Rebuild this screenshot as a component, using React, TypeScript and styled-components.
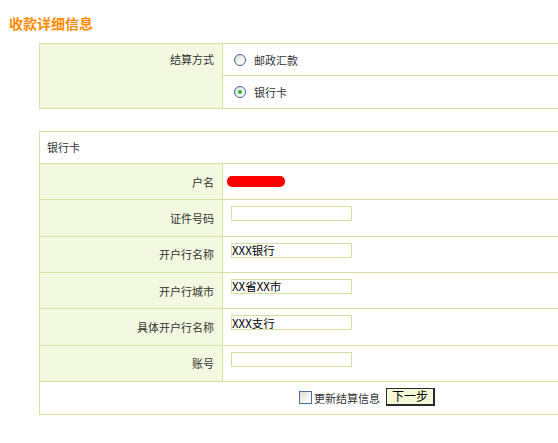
import React from 'react'
import styled, { createGlobalStyle } from 'styled-components'

const GlobalStyle = createGlobalStyle`
  html, body {
    margin: 0;
    padding: 0;
    overflow: hidden;
    background: #ffffff;
  }
  body {
    font-family: 'Noto Sans CJK SC', 'Liberation Sans', sans-serif;
    font-size: 11px;
    color: #333333;
  }
`

const BORDER = '#d3e1a2'
const LABEL_BG = '#f3f8e0'

const Page = styled.div`
  padding: 13px 0 0 9px;
`

const Title = styled.h2`
  margin: 0 0 9px 0;
  font-size: 14px;
  line-height: 21px;
  font-weight: 700;
  color: #ff8a00;
`

// the tables run on past the right edge of the window, so no right border
const Table = styled.div<{ $gap?: number }>`
  margin-left: 30px;
  margin-bottom: ${(p) => p.$gap || 0}px;
  border: 1px solid ${BORDER};
  border-right: none;
`

const PayGrid = styled.div`
  display: grid;
  grid-template-columns: 183px 1fr;
  grid-template-rows: 32px 32px;
`

const PayLabel = styled.div`
  grid-row: 1 / span 2;
  background: ${LABEL_BG};
  border-right: 1px solid ${BORDER};
  text-align: right;
  padding-right: 8px;
  line-height: 31px;
`

const PayOption = styled.label<{ $first?: boolean }>`
  display: flex;
  align-items: center;
  gap: 8px;
  padding-left: 11px;
  border-bottom: ${(p) => (p.$first ? `1px solid ${BORDER}` : 'none')};
`

const Radio = styled.span<{ $checked?: boolean }>`
  position: relative;
  width: 10px;
  height: 10px;
  border: 1px solid #38659a;
  border-radius: 50%;
  background: linear-gradient(135deg, #dcdcd4 0%, #ffffff 80%);
  &::after {
    content: '';
    display: ${(p) => (p.$checked ? 'block' : 'none')};
    position: absolute;
    left: 3px;
    top: 3px;
    width: 4px;
    height: 4px;
    border-radius: 50%;
    background: #2fb42f;
  }
`

const SectionHead = styled.div`
  height: 31px;
  line-height: 31px;
  padding-left: 7px;
  border-bottom: 1px solid ${BORDER};
`

const FieldRow = styled.div`
  display: grid;
  grid-template-columns: 183px 1fr;
  height: 35.33px;
  border-bottom: 1px solid ${BORDER};
`

const FieldLabel = styled.div`
  background: ${LABEL_BG};
  border-right: 1px solid ${BORDER};
  display: flex;
  align-items: center;
  justify-content: flex-end;
  padding-right: 8px;
`

const FieldValue = styled.div<{ $center?: boolean }>`
  display: flex;
  align-items: ${(p) => (p.$center ? 'center' : 'flex-start')};
  padding: ${(p) => (p.$center ? '0 0 0 4px' : '6px 0 0 8px')};
`

const TextBox = styled.input`
  box-sizing: border-box;
  width: 121px;
  height: 15px;
  margin: 0;
  padding: 0;
  border: 1px solid #d2dfa5;
  font-family: 'Noto Sans CJK SC', 'Liberation Sans', sans-serif;
  font-size: 11.5px;
  line-height: 13px;
  color: #000000;
  background: #ffffff;
  outline: none;
`

const Redacted = styled.span`
  display: block;
  width: 58px;
  height: 11px;
  margin-top: -1px;
  background: #ff0000;
  border-radius: 5px;
`

const Footer = styled.div`
  height: 32px;
  display: flex;
  align-items: center;
  gap: 6px;
  padding-left: 259px;
`

const CheckLabel = styled.label`
  display: flex;
  align-items: center;
  gap: 2px;
  color: #333333;
`

const CheckBox = styled.span`
  width: 11px;
  height: 11px;
  border: 1px solid #4a6e9c;
  background: linear-gradient(135deg, #dcdcd4 0%, #ffffff 85%);
`

const NextButton = styled.button`
  box-sizing: border-box;
  width: 49px;
  height: 18px;
  margin: 0 0 2px 0;
  padding: 0 0 2px 0;
  border: 1px solid #2a2a2a;
  border-right-width: 2px;
  border-bottom-width: 2px;
  background: #f6f9d8;
  font-family: 'Noto Sans CJK SC', 'Liberation Sans', sans-serif;
  font-size: 12px;
  line-height: 13px;
  color: #000000;
`

const fields = [
  { label: '证件号码', value: '' },
  { label: '开户行名称', value: 'XXX银行' },
  { label: '开户行城市', value: 'XX省XX市' },
  { label: '具体开户行名称', value: 'XXX支行' },
  { label: '账号', value: '' },
]

const App: React.FC = () => {
  return (
    <Page>
      <GlobalStyle />
      <Title>收款详细信息</Title>

      <Table $gap={22}>
        <PayGrid>
          <PayLabel>结算方式</PayLabel>
          <PayOption $first>
            <Radio />
            邮政汇款
          </PayOption>
          <PayOption>
            <Radio $checked />
            银行卡
          </PayOption>
        </PayGrid>
      </Table>

      <Table>
        <SectionHead>银行卡</SectionHead>
        <FieldRow>
          <FieldLabel>户名</FieldLabel>
          <FieldValue $center>
            <Redacted />
          </FieldValue>
        </FieldRow>
        {fields.map((f) => (
          <FieldRow key={f.label}>
            <FieldLabel>{f.label}</FieldLabel>
            <FieldValue>
              <TextBox defaultValue={f.value} />
            </FieldValue>
          </FieldRow>
        ))}
        <Footer>
          <CheckLabel>
            <CheckBox />
            更新结算信息
          </CheckLabel>
          <NextButton>下一步</NextButton>
        </Footer>
      </Table>
    </Page>
  )
}

export default App
